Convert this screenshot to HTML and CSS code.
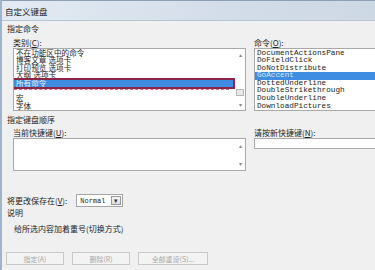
FILE: index.html
```html
<!DOCTYPE html>
<html lang="zh-CN">
<head>
  <meta charset="UTF-8">
  <title>自定义键盘</title>
  <link rel="stylesheet" href="styles.css">
</head>
<body>
  <div class="window">
    <div class="titlebar">自定义键盘</div>
    <div class="dialog">
      <div class="group-title">指定命令</div>
      <div class="cols">
        <div class="col">
          <div class="label">类别(<u>C</u>):</div>
          <div class="listbox cats">
            <ul>
              <li>不在功能区中的命令</li>
              <li>博客文章 选项卡</li>
              <li>打印预览 选项卡</li>
              <li>大纲 选项卡</li>
              <li class="selected">所有命令</li>
              <li class="marked"></li>
              <li>宏</li>
              <li>字体</li>
            </ul>
            <div class="vscroll">
              <span class="arrow">&#9652;</span>
              <span class="thumb"></span>
              <span class="arrow">&#9662;</span>
            </div>
          </div>
        </div>
        <div class="col">
          <div class="label">命令(<u>O</u>):</div>
          <div class="listbox cmds">
            <ul>
              <li>DocumentActionsPane</li>
              <li>DoFieldClick</li>
              <li>DoNotDistribute</li>
              <li class="selected">GoAccent</li>
              <li>DottedUnderline</li>
              <li>DoubleStrikethrough</li>
              <li>DoubleUnderline</li>
              <li>DownloadPictures</li>
            </ul>
          </div>
        </div>
      </div>

      <div class="group-title second">指定键盘顺序</div>
      <div class="cols">
        <div class="col">
          <div class="label">当前快捷键(<u>U</u>):</div>
          <div class="listbox keys">
            <ul></ul>
            <div class="vscroll plain">
              <span class="arrow">&#9652;</span>
              <span class="arrow">&#9662;</span>
            </div>
          </div>
        </div>
        <div class="col">
          <div class="label">请按新快捷键(<u>N</u>):</div>
          <div class="textbox"></div>
        </div>
      </div>

      <div class="save-row">
        <span>将更改保存在(<u>V</u>):</span>
        <div class="select">
          <span class="select-value">Normal</span>
          <span class="select-btn">&#9662;</span>
        </div>
      </div>

      <div class="group-title desc-title">说明</div>
      <div class="desc">给所选内容加着重号(切换方式)</div>

      <div class="buttons">
        <button class="btn" disabled>指定(A)</button>
        <button class="btn" disabled>删除(R)</button>
        <button class="btn wide" disabled>全部重设(S)...</button>
      </div>
    </div>
  </div>
</body>
</html>
```

FILE: styles.css
```css
*{
  box-sizing: border-box;
  margin: 0;
  padding: 0;
}
html, body{
  width: 375px;
  height: 270px;
  overflow: hidden;
}
body{
  background: #f0f0f0;
  font-family: "Noto Sans CJK SC", "Noto Sans", sans-serif;
  font-size: 8px;
  color: #1f1f1f;
}
u{
  text-decoration: underline;
}
.window{
  height: 270px;
  border-left: 2px solid #9fb3c9;
}
.titlebar{
  height: 21px;
  line-height: 21px;
  padding-left: 3px;
  font-size: 8.5px;
  background: linear-gradient(to right, #e3eaf3, #d3dde9 60%, #cdd8e5);
  border-top: 1px solid #8d9fb4;
  border-bottom: 1px solid #b7c5d5;
  color: #1a1a1a;
}
.dialog{
  padding: 0 0 0 5px;
}
.group-title{
  height: 10px;
  line-height: 10px;
  margin-top: 3px;
}
.group-title.second{
  margin-top: 4px;
}
.cols{
  display: grid;
  grid-template-columns: 233px 1fr;
  column-gap: 8px;
  padding-left: 6px;
}
.col{
  min-width: 0;
}
.label{
  height: 10px;
  line-height: 10px;
  margin-top: 4px;
  white-space: nowrap;
}
.group-title.second + .cols .label{
  margin-top: 3px;
}
.listbox{
  display: flex;
  background: #fff;
  border: 1px solid #a9a9a9;
  overflow: hidden;
}
.listbox ul{
  list-style: none;
  flex: 1;
  min-width: 0;
  padding-top: 0.5px;
}
.listbox li{
  height: 7.6px;
  line-height: 7.6px;
  padding-left: 2px;
  white-space: nowrap;
  overflow: hidden;
}
.cats{
  height: 63px;
}
.cats li{
  font-family: "Liberation Sans", "Noto Sans CJK SC", sans-serif;
  font-size: 7.6px;
  overflow: visible;
}
.cats li.selected{
  background: #3f8de3;
  color: #eaf2fb;
  outline: 2px solid #8e2446;
  margin-right: 2px;
}
.cats li.marked{
  position: relative;
}
.cats li.marked::after{
  content: "";
  position: absolute;
  left: 0;
  right: 6px;
  top: 2px;
  border-top: 1px dashed #e2687e;
}
.cmds{
  height: 63px;
  border-right: none;
}
.cmds li{
  font-family: "Liberation Mono", monospace;
  font-size: 7.7px;
  color: #222;
}
.cmds li.selected{
  background: #3f8de3;
  color: #d6e6f8;
}
.vscroll{
  width: 10px;
  display: flex;
  flex-direction: column;
  align-items: center;
  color: #8a8a8a;
  font-size: 6px;
  padding: 1px 0;
}
.vscroll .arrow{
  height: 9px;
  line-height: 9px;
}
.vscroll .thumb{
  margin-top: auto;
  margin-bottom: 4px;
  width: 8px;
  height: 7px;
  border: 1px solid #b8b8b8;
  background: #e8e8e8;
}
.vscroll.plain{
  justify-content: space-between;
  padding: 2px 0;
}
.keys{
  height: 33px;
}
.textbox{
  height: 11px;
  background: #fff;
  border: 1px solid #a9a9a9;
  border-right: none;
}
.save-row{
  display: flex;
  align-items: center;
  gap: 9px;
  margin-top: 23px;
  height: 13px;
}
.select{
  display: flex;
  width: 47px;
  height: 13px;
  background: #fff;
  border: 1px solid #a5a5a5;
  padding: 1px;
}
.select-value{
  flex: 1;
  font-family: "Liberation Mono", monospace;
  font-size: 7px;
  line-height: 11px;
  padding-left: 2px;
}
.select-btn{
  width: 10px;
  height: 9px;
  border: 1px solid #9a9a9a;
  background: linear-gradient(#f4f4f4, #dedede);
  font-size: 7px;
  line-height: 7px;
  text-align: center;
  color: #333;
}
.desc-title{
  margin-top: 1px;
}
.desc{
  height: 10px;
  line-height: 10px;
  margin-top: 6px;
  padding-left: 7px;
}
.buttons{
  display: flex;
  gap: 8px;
  margin-top: 18px;
  margin-left: -1px;
}
.btn{
  width: 58px;
  height: 13px;
  font-family: inherit;
  font-size: 7px;
  color: #a9a9a9;
  background: #f3f3f3;
  border: 1px solid #c9c9c9;
}
.btn.wide{
  width: 70px;
}
```
